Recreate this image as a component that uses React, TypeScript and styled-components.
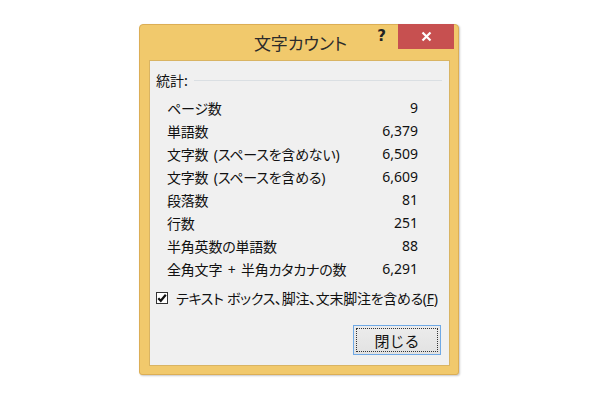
import { Fragment } from 'react';
import styled, { createGlobalStyle } from 'styled-components';

const GlobalStyle = createGlobalStyle`
  html, body {
    margin: 0;
    padding: 0;
    background: #ffffff;
  }
  body {
    font-family: "Noto Sans", "Noto Sans CJK JP", sans-serif;
    color: #111;
  }
`

const Page = styled.div`
  width: 600px;
  height: 399px;
  padding: 24px 0 0 139px;
  box-sizing: border-box;
`

const Dialog = styled.div`
  width: 320px;
  height: 351px;
  box-sizing: border-box;
  display: flex;
  flex-direction: column;
  background: #f1c96c;
  border: 1px solid #dcae55;
  border-radius: 4px 4px 3px 3px;
  padding: 0 8px 8px 9px;
  box-shadow: 1px 1px 2px rgba(0, 0, 0, 0.22);
`

const TitleBar = styled.div`
  height: 35px;
  display: grid;
  grid-template-columns: 1fr auto 1fr;
  align-items: center;
`

const Title = styled.div`
  grid-column: 2;
  font-family: "Noto Sans CJK JP", sans-serif;
  font-feature-settings: "palt";
  font-size: 17px;
  color: #2b2b2b;
  padding-left: 2px;
`

const Controls = styled.div`
  grid-column: 3;
  justify-self: end;
  align-self: start;
  display: flex;
  align-items: flex-start;
  margin: -1px -4px 0 0;
`

const HelpMark = styled.span`
  font-family: "DejaVu Sans", sans-serif;
  font-weight: bold;
  font-size: 15px;
  line-height: 15px;
  color: #222;
  margin: 5px 12px 0 0;
`

const CloseButton = styled.div`
  width: 56px;
  height: 25px;
  background: #c75050;
  display: flex;
  align-items: center;
  justify-content: center;
`

const Content = styled.div`
  flex: 1;
  background: #f0f0f0;
  border: 1px solid #d9b463;
  display: flex;
  flex-direction: column;
`

const GroupHeader = styled.div`
  display: flex;
  align-items: center;
  gap: 6px;
  height: 20px;
  margin: 9px 7px 0 6px;
  font-size: 14px;
  font-family: "Noto Sans CJK JP", sans-serif;
`

const GroupLine = styled.div`
  flex: 1;
  border-top: 1px solid #dadfe3;
  margin-top: 1px;
`

const StatList = styled.div`
  display: grid;
  grid-template-columns: 1fr auto;
  grid-auto-rows: 23px;
  align-items: center;
  margin-top: 6px;
  padding: 0 31px 0 17px;
  font-size: 14px;
`

const StatLabel = styled.div`
  font-feature-settings: "palt";
  letter-spacing: -0.2px;
  word-spacing: 2px;
  white-space: nowrap;
`

const StatValue = styled.div`
  text-align: right;
`

const CheckRow = styled.label`
  display: flex;
  align-items: center;
  gap: 8px;
  height: 20px;
  margin: 8px 0 0 6px;
  font-size: 14px;
  font-feature-settings: "palt";
  letter-spacing: -0.3px;
`

const CheckBox = styled.span`
  width: 12px;
  height: 12px;
  box-sizing: border-box;
  border: 1px solid #333;
  background: #fff;
  display: flex;
  align-items: center;
  justify-content: center;
`

const Footer = styled.div`
  display: flex;
  justify-content: flex-end;
  margin: 17px 8px 0 0;
`

const Button = styled.button`
  width: 88px;
  height: 30px;
  padding: 2px;
  box-sizing: border-box;
  border: 1px solid #6fa9e6;
  background: linear-gradient(#ececec, #e2e2e2);
  font-family: "Noto Sans CJK JP", sans-serif;
  font-size: 15px;
  color: #111;
`

const FocusRect = styled.span`
  height: 100%;
  display: flex;
  align-items: center;
  justify-content: center;
  border: 1px dotted #333;
  box-sizing: border-box;
`

const stats = [
  { label: 'ページ数', value: '9' },
  { label: '単語数', value: '6,379' },
  { label: '文字数 (スペースを含めない)', value: '6,509' },
  { label: '文字数 (スペースを含める)', value: '6,609' },
  { label: '段落数', value: '81' },
  { label: '行数', value: '251' },
  { label: '半角英数の単語数', value: '88' },
  { label: '全角文字 + 半角カタカナの数', value: '6,291' },
]

const App = () => {
  return (
    <>
      <GlobalStyle />
      <Page>
        <Dialog>
          <TitleBar>
            <Title>文字カウント</Title>
            <Controls>
              <HelpMark>?</HelpMark>
              <CloseButton>
                <svg width="11" height="11" viewBox="0 0 11 11">
                  <path d="M1.5 1.5 L9.5 9.5 M9.5 1.5 L1.5 9.5" stroke="#fff" strokeWidth="2.2" />
                </svg>
              </CloseButton>
            </Controls>
          </TitleBar>
          <Content>
            <GroupHeader>
              <span>統計:</span>
              <GroupLine />
            </GroupHeader>
            <StatList>
              {stats.map(item => (
                <Fragment key={item.label}>
                  <StatLabel>{item.label}</StatLabel>
                  <StatValue>{item.value}</StatValue>
                </Fragment>
              ))}
            </StatList>
            <CheckRow>
              <CheckBox>
                <svg width="10" height="10" viewBox="0 0 10 10">
                  <path d="M1.3 5.2 L3.8 7.8 L8.8 1.8" fill="none" stroke="#111" strokeWidth="2.2" />
                </svg>
              </CheckBox>
              <span>テキスト ボックス、脚注、文末脚注を含める(<u>F</u>)</span>
            </CheckRow>
            <Footer>
              <Button>
                <FocusRect>閉じる</FocusRect>
              </Button>
            </Footer>
          </Content>
        </Dialog>
      </Page>
    </>
  );
}

export default App;
